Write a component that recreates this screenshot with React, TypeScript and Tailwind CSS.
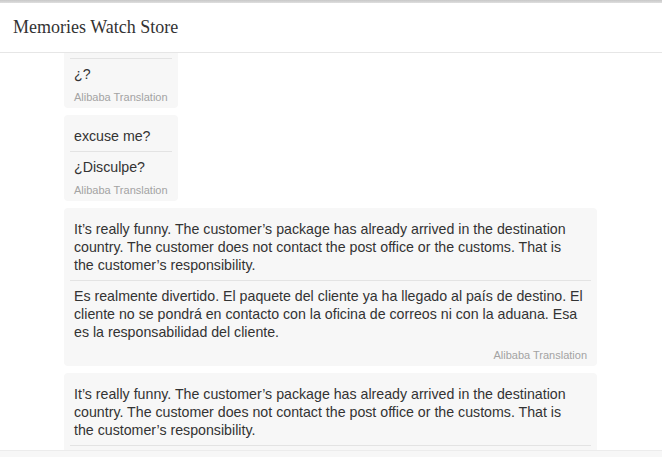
import React from 'react';

interface Message {
  id: number;
  original: string[];
  translated: string[];
  wide?: boolean;
}

const englishLong = [
  'It’s really funny. The customer’s package has already arrived in the destination',
  'country. The customer does not contact the post office or the customs. That is',
  'the customer’s responsibility.',
];

const spanishLong = [
  'Es realmente divertido. El paquete del cliente ya ha llegado al país de destino. El',
  'cliente no se pondrá en contacto con la oficina de correos ni con la aduana. Esa',
  'es la responsabilidad del cliente.',
];

const messages: Message[] = [
  { id: 1, original: ['?'], translated: ['¿?'] },
  { id: 2, original: ['excuse me?'], translated: ['¿Disculpe?'] },
  { id: 3, original: englishLong, translated: spanishLong, wide: true },
  { id: 4, original: englishLong, translated: spanishLong, wide: true },
];

const Lines: React.FC<{ lines: string[] }> = ({ lines }) => (
  <>
    {lines.map((line, i) => (
      <div key={i} className="whitespace-nowrap">
        {line}
      </div>
    ))}
  </>
);

const Bubble: React.FC<{ message: Message }> = ({ message }) => (
  <div
    className={
      message.wide
        ? 'w-[533px] rounded bg-[#f7f7f7] px-[6px] pt-[6px] pb-[3px]'
        : 'w-fit rounded bg-[#f7f7f7] px-[6px] pt-[6px] pb-[3px]'
    }
  >
    <div className="px-[4px] pt-[6px] pb-[6px] text-[14.2px] leading-[18px] text-[#333]">
      <Lines lines={message.original} />
    </div>
    <div className="border-t border-[#e3e3e3] px-[4px] pt-[6px] pb-[6px] text-[14.2px] leading-[18px] text-[#333]">
      <Lines lines={message.translated} />
    </div>
    <div className="px-[4px] text-right text-[11px] leading-[16px] text-[#a3a3a3]">
      Alibaba Translation
    </div>
  </div>
);

export default function App() {
  return (
    <div
      className="flex h-[457px] w-[662px] flex-col overflow-hidden bg-white"
      style={{ fontFamily: '"Liberation Sans", Arial, sans-serif' }}
    >
      <div className="h-[3px] bg-gradient-to-b from-[#c8c8c8] to-[#dedede]" />
      <header className="flex h-[50px] shrink-0 items-center border-b border-[#e6e6e6] px-[13px]">
        <h1
          className="text-[18px] text-[#333]"
          style={{ fontFamily: '"Liberation Serif", "Times New Roman", serif' }}
        >
          Memories Watch Store
        </h1>
      </header>

      <main className="flex-1 overflow-hidden">
        <div className="-mt-[31px] flex flex-col gap-[7px] pl-[64px]">
          {messages.map((m) => (
            <Bubble key={m.id} message={m} />
          ))}
        </div>
      </main>

      <footer className="h-[7px] shrink-0 border-t border-[#ececec] bg-[#f7f7f7]" />
    </div>
  );
}
